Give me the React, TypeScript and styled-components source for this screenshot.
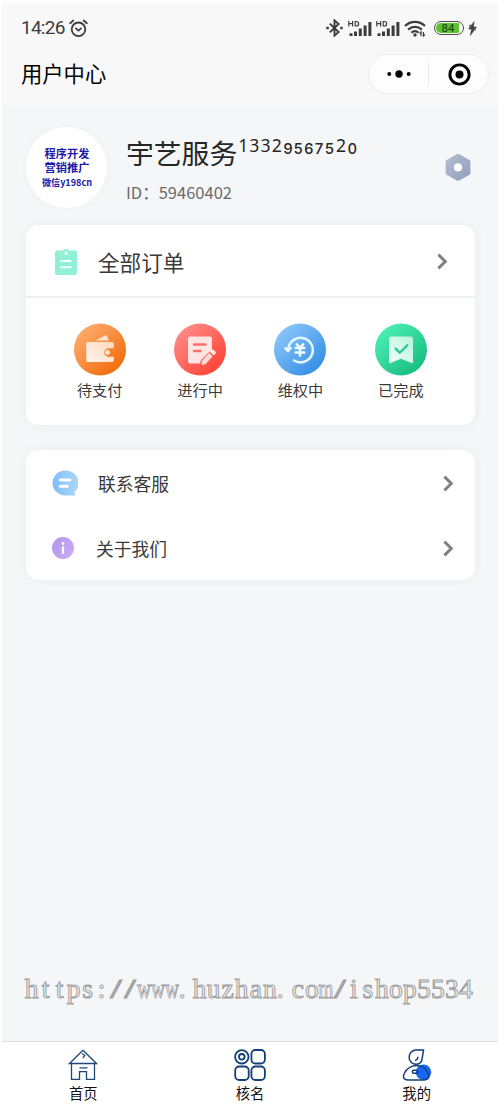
import React from 'react';
import styled, { createGlobalStyle } from 'styled-components';

const GlobalStyle = createGlobalStyle`
  *, *::before, *::after { box-sizing: border-box; }
  body {
    margin: 0;
    background: #fff;
    font-family: 'Noto Sans CJK SC', 'Noto Sans', sans-serif;
    color: #3a3a3a;
  }
  svg { display: block; flex: none; }
`;

const Screen = styled.div`
  width: 500px;
  height: 1111px;
  display: flex;
  flex-direction: column;
  border: solid #fefefe;
  border-width: 3px 2px 0;
  background: #f5f6f8;
  overflow: hidden;
`;

const Header = styled.header`
  height: 102px;
  flex: none;
  background: #f8f8f8;
`;

const StatusBar = styled.div`
  height: 50px;
  display: flex;
  align-items: center;
  padding: 0 21px 0 19px;
`;

const Clock = styled.span`
  font: 400 19px/24px Roboto, sans-serif;
  letter-spacing: -0.75px;
  color: #3c3c3c;
  margin-right: 4px;
`;

const StatusIcons = styled.div`
  margin-left: auto;
  display: flex;
  align-items: center;
`;

const Signal = styled.div`
  display: flex;
  width: 28px;
`;

const Battery = styled.div`
  width: 30px;
  height: 14px;
  margin: 0 4px 0 8px;
  padding: 1px;
  border: 1.3px solid #4a4f48;
  border-radius: 7px;
  display: flex;
`;

const Charge = styled.span`
  flex: 1;
  border-radius: 5px;
  background: linear-gradient(90deg, #58c42f 90%, #fff 90%);
  color: #173c10;
  font: 400 11.5px/10.5px Roboto, sans-serif;
  text-align: center;
  padding-right: 2px;
`;

const TitleBar = styled.div`
  height: 42px;
  display: flex;
  align-items: center;
  justify-content: space-between;
  padding: 0 9px 0 19px;
`;

const PageTitle = styled.h1`
  margin: 0 0 2px;
  font-size: 21.3px;
  line-height: 30px;
  font-weight: 400;
  color: #000;
`;

const Capsule = styled.div`
  width: 121px;
  height: 40px;
  border: 1px solid #ededed;
  border-radius: 20px;
  background: #fdfdfd;
  display: flex;
  align-items: center;
`;

const CapsuleHalf = styled.div<{ $divided?: boolean }>`
  flex: 1;
  height: 24px;
  display: flex;
  align-items: center;
  justify-content: center;
  border-right: ${(p) => (p.$divided ? '1px solid #e8e8e8' : '0')};
`;

const Content = styled.main`
  flex: 1;
  display: flex;
  flex-direction: column;
  padding: 22px 23px 0 23.5px;
`;

const Profile = styled.section`
  height: 81px;
  display: flex;
  align-items: center;
  padding-right: 4px;
`;

const Avatar = styled.div`
  width: 81px;
  height: 81px;
  border-radius: 50%;
  background: #fff;
  box-shadow: 0 0 10px rgba(0, 0, 0, 0.03);
  display: flex;
  flex-direction: column;
  align-items: center;
  justify-content: center;
  padding-left: 2px;
  color: #1d18a8;
  font-weight: 700;
`;

const AvatarLine = styled.span<{ $small?: boolean }>`
  font-size: ${(p) => (p.$small ? 9.1 : 11.2)}px;
  line-height: 14.3px;
  white-space: nowrap;
`;

const Identity = styled.div`
  flex: 1;
  margin-left: 19.5px;
`;

const Name = styled.div`
  height: 40px;
  display: flex;
  font-size: 27.8px;
  line-height: 40px;
  color: #262626;
`;

const Digits = styled.span<{ $low?: boolean }>`
  font-family: ${(p) => (p.$low ? 'Inter' : "'Noto Sans'")}, sans-serif;
  font-size: ${(p) => (p.$low ? 14.8 : 17.6)}px;
  font-weight: ${(p) => (p.$low ? 500 : 400)};
  font-variant-numeric: tabular-nums;
  letter-spacing: ${(p) => (p.$low ? 0.8 : 1.1)}px;
  line-height: ${(p) => (p.$low ? 35 : 27)}px;
  margin-left: ${(p) => (p.$low ? 0.3 : 1)}px;
`;

const UserId = styled.div`
  font-size: 16.5px;
  line-height: 24px;
  color: #6b6b6b;
  margin-top: 8px;
`;

const Card = styled.section<{ $gap: number }>`
  margin-top: ${(p) => p.$gap}px;
  border-radius: 13px;
  background: #fff;
  box-shadow: 0 0 12px rgba(60, 70, 90, 0.055);
`;

const OrdersHead = styled.div`
  height: 73px;
  display: flex;
  align-items: center;
  padding: 2px 27px 0 28px;
  border-bottom: 2px solid #eeeff0;
`;

const OrdersTitle = styled.span`
  flex: 1;
  margin-left: 20.5px;
  font-size: 21.6px;
  line-height: 32px;
`;

const OrderGrid = styled.div`
  height: 127px;
  display: grid;
  grid-template-columns: repeat(4, 1fr);
  padding: 25px 24px 0;
`;

const OrderItem = styled.div`
  display: flex;
  flex-direction: column;
  align-items: center;
  font-size: 15.2px;
  line-height: 22px;
  gap: 2px;
`;

const ServiceRow = styled.div`
  height: 65px;
  display: flex;
  align-items: center;
  padding: 1px 21px 0 26px;
`;

const ServiceIcon = styled.span<{ $width: number }>`
  width: ${(p) => p.$width}px;
`;

const ServiceLabel = styled.span`
  flex: 1;
  font-size: 17.8px;
  line-height: 26px;
`;

const Watermark = styled.div`
  margin: auto -1px 37px -1px;
  height: 30px;
  display: flex;
  font: 400 27.5px/30px 'Liberation Serif', serif;
  color: #f5f6f8;
  -webkit-text-stroke: 1px #9c9ea1;
`;

const Glyph = styled.span<{ $char: string }>`
  width: 14.03px;
  flex: none;
  display: flex;
  justify-content: ${(p) => (p.$char === '.' ? 'flex-start' : 'center')};
  transform: scaleX(${(p) => ('wm'.includes(p.$char) ? 0.7 : p.$char === '/' ? 1.5 : 1)});
`;

const TabBar = styled.nav`
  height: 70px;
  flex: none;
  margin: 0 -2px;
  display: grid;
  grid-template-columns: repeat(3, 1fr);
  border-top: 1px solid #dfe2e4;
  background: #fff;
`;

const Tab = styled.div`
  display: flex;
  flex-direction: column;
  align-items: center;
  padding-top: 6px;
  font-size: 14.3px;
  line-height: 20px;
  color: #111;
  gap: 1px;
`;

const AlarmIcon = () => (
  <svg width="19" height="19" viewBox="0 0 19 19" fill="none" stroke="#3c3c3c" strokeWidth="1.8" strokeLinecap="round">
    <circle cx="9.5" cy="10.3" r="6.8" />
    <path d="M1.200 4.200 4.300 1.500M17.800 4.200 14.700 1.500M7 9.400l2.500 2.200L12 9.400" />
  </svg>
);

const BluetoothIcon = () => (
  <svg width="17" height="18" viewBox="0 0 17 18" fill="none" stroke="#3c3c3c" strokeWidth="1.900">
    <path d="M3.800 4.600 12.600 13 8.500 16.600V1.400l4.100 3.600-8.800 8.400" />
    <path d="M.3 9h2.500M14.200 9h2.500" strokeWidth="2.400" />
  </svg>
);

const SignalIcon = () => (
  <Signal>
    <svg width="25" height="17" viewBox="0 0 25 17">
      <path d="M.8 1v5.500M4.600 1v5.500M.8 3.700h3.800M7.200 1.500V6h1c3.300 0 3.300-4.500 0-4.500z" stroke="#3c3c3c" strokeWidth="1.200" fill="none" />
      <path d="M1.500 13.300h3V16h-3zM6 11.500h3V16H6zM10.800 8.500h3V16h-3zM15.600 5.500h3V16h-3zM20.400 2h3v14h-3z" fill="#3c3c3c" />
    </svg>
  </Signal>
);

const WifiIcon = () => (
  <svg width="22" height="17" viewBox="0 0 22 17" fill="none" stroke="#3c3c3c" strokeWidth="2.200">
    <path d="M1 6c5.600-5.500 14.400-5.500 20 0M4.200 9.600c3.800-3.700 9.800-3.700 13.600 0M7.400 12.700c2.100-2 5.100-2 7.200 0" />
    <circle cx="11" cy="15" r="1.700" fill="#3c3c3c" stroke="none" />
    <path d="M17 16v-4l-1.300 1.700M19.400 12v4.200l1.500-1.800" strokeWidth="1.200" />
  </svg>
);

const BoltIcon = () => (
  <svg width="9" height="15" viewBox="0 0 9 15" fill="#3c3c3c" stroke="#3c3c3c" strokeWidth=".5">
    <path d="M6.200.5.600 8h3L2.300 14.500 8.500 6H5.300zM1.500 4.200h2.400L2 7zM7.500 9.200H5L7 7z" />
  </svg>
);

const ChevronIcon = () => (
  <svg width="11" height="17" viewBox="0 0 11 17" fill="none" stroke="#808080" strokeWidth="3">
    <path d="m1.400 1.600 6.900 6.900-6.900 6.900" />
  </svg>
);

const HexIcon = () => (
  <svg width="26" height="28" viewBox="0 0 26 28">
    <defs>
      <linearGradient id="hex" x1="0" y1="0" x2="1" y2="1">
        <stop stopColor="#b4bed4" />
        <stop offset="1" stopColor="#929db9" />
      </linearGradient>
    </defs>
    <path d="M11.700.3q1.300-.7 2.600 0l10.100 5.800q1 .6 1 1.800v11q0 1.200-1 1.800l-10.100 5.800q-1.300.7-2.600 0L1.600 20.700q-1-.6-1-1.800v-11q0-1.200 1-1.800z" fill="url(#hex)" />
    <circle cx="13" cy="13.400" r="4.200" fill="#fff" />
  </svg>
);

const ClipboardIcon = () => (
  <svg width="24" height="28" viewBox="0 0 24 28">
    <rect x="1" y="2.500" width="22" height="24.500" rx="2" fill="#8ff0d5" />
    <path d="M6 4c1.800-.2 2.500-.5 3.300-1.700 1.400-2.100 4-2.100 5.400 0 .8 1.200 1.500 1.500 3.300 1.700l-1 2.200H7z" fill="#8ff0d5" />
    <path d="M5.500 2.600c.3 3 1.200 4 3 4h7c1.800 0 2.700-1 3-4" fill="none" stroke="#aef4e1" strokeWidth=".8" />
    <circle cx="12" cy="5" r="1.500" fill="#fff" />
    <path d="M6.300 13h11.400M6.300 19.300h11.400" stroke="#f2fffb" strokeWidth="2" />
  </svg>
);

const Disc = ({ id, from, to, children }: { id: string; from: string; to: string; children: React.ReactNode }) => (
  <svg width="52" height="53" viewBox="0 0 52 53">
    <defs>
      <linearGradient id={id} x1=".1" y1=".1" x2=".85" y2=".9">
        <stop stopColor={from} />
        <stop offset="1" stopColor={to} />
      </linearGradient>
    </defs>
    <circle cx="26" cy="26.500" r="26" fill={`url(#${id})`} />
    {children}
  </svg>
);

const WalletIcon = () => (
  <Disc id="pay" from="#ffac70" to="#f26c0c">
    <defs>
      <linearGradient id="leather" x1="0" y1="1" x2="1" y2="0">
        <stop stopColor="#fff4ec" />
        <stop offset="1" stopColor="#ffd9bd" />
      </linearGradient>
    </defs>
    <path d="m21.500 17.500 9.700-5q1.200-.5 1.800.6l2 4.400z" fill="#ffe2cd" />
    <path d="M14 19h24q1.800 0 1.800 1.800v4.500h-5.300a4.200 4.200 0 0 0 0 8.400h5.300v3.500q0 1.800-1.800 1.800H14q-1.800 0-1.800-1.800V20.800Q12.200 19 14 19z" fill="url(#leather)" />
    <circle cx="33.500" cy="29.500" r="2.400" fill="#ffe9da" />
  </Disc>
);

const NoteIcon = () => (
  <Disc id="doing" from="#ff8d88" to="#ff4435">
    <path d="M16 13.500h20q2 0 2 2v11.500l-11 10-1 3.500H16q-2 0-2-2V15.500q0-2 2-2z" fill="#ffe6e4" />
    <path d="M20 21.500h11.500M20 28h6.500" stroke="#ff6e66" strokeWidth="2.500" strokeLinecap="round" />
    <g transform="translate(27 42.500) rotate(-48)">
      <path d="M0 0 3.500-2.800H15V2.800H3.500z" fill="#ffd9d6" stroke="#ff5a4e" strokeWidth=".8" />
      <rect x="16" y="-2.900" width="4" height="5.800" rx="1.300" fill="#ffe6e4" />
    </g>
  </Disc>
);

const RefundIcon = () => (
  <Disc id="refund" from="#8dc7fb" to="#348fe4">
    <path d="M14.300 25.500A12.300 12.300 0 1 1 20 37.500" fill="none" stroke="#e3f5ff" strokeWidth="2.600" strokeLinecap="round" />
    <path d="m11 25.300 3 3.300 3-3.500z" fill="#e3f5ff" stroke="#e3f5ff" strokeWidth="2" strokeLinejoin="round" />
    <path d="m22.800 21.300 3.200 3.500 3.200-3.500M26 24.800v8M21.700 25h8.600M21.700 29.500h8.600" stroke="#eefaff" strokeWidth="2.500" strokeLinecap="round" fill="none" />
  </Disc>
);

const DoneIcon = () => (
  <Disc id="done" from="#4df0b5" to="#18bd82">
    <defs>
      <linearGradient id="ribbon" x1="0" y1="1" x2="1" y2="0">
        <stop stopColor="#effff9" />
        <stop offset="1" stopColor="#b8f3dc" />
      </linearGradient>
    </defs>
    <path d="M16 13.500h20q2 0 2 2V39q0 1.700-1.500 1L26 35.700 15.500 40q-1.500.7-1.500-1V15.500q0-2 2-2z" fill="url(#ribbon)" />
    <path d="m20.600 25.700 4.200 4 7.500-7.500" fill="none" stroke="#25c98f" strokeWidth="2.300" strokeLinecap="round" strokeLinejoin="round" />
  </Disc>
);

const ChatIcon = () => (
  <svg width="26" height="26" viewBox="0 0 26 26">
    <defs>
      <linearGradient id="chat" x1="0" y1=".5" x2="1" y2=".5">
        <stop stopColor="#83bdf4" />
        <stop offset="1" stopColor="#aad8fc" />
      </linearGradient>
    </defs>
    <path d="M13 .5a12.500 12.500 0 1 0 0 25h10q1.300-.4.200-1.400l-1-1.700A12.500 12.500 0 0 0 13 .5z" fill="url(#chat)" />
    <path d="M8.300 10h9.600M8.300 16.300h7" stroke="#fff" strokeWidth="3" strokeLinecap="round" />
  </svg>
);

const InfoIcon = () => (
  <svg width="22" height="22" viewBox="0 0 22 22">
    <defs>
      <linearGradient id="info" x1="0" y1="0" x2="1" y2=".7">
        <stop stopColor="#b294ea" />
        <stop offset="1" stopColor="#c9aaf8" />
      </linearGradient>
    </defs>
    <circle cx="11" cy="11" r="11" fill="url(#info)" />
    <circle cx="11" cy="6.500" r="1.400" fill="#fff" />
    <path d="M11 10.300v5.700" stroke="#fff" strokeWidth="2.300" strokeLinecap="round" />
  </svg>
);

const HomeIcon = () => (
  <svg width="30" height="34" viewBox="0 0 30 34" fill="none" stroke="#1f4878" strokeWidth="1.300">
    <path d="M1.500 15.500 14.500 2.800q.5-.5 1 0l13 12.700zM3.500 15.500v15.900h8V23.700h7v7.700h8V15.500M11.500 19.800h8M14 5.500l2.800 2-2 2.700" />
  </svg>
);

const GridIcon = () => (
  <svg width="32" height="34" viewBox="0 0 32 34" fill="none" stroke="#123f78" strokeWidth="1.800">
    <circle cx="7.800" cy="8.800" r="6.700" />
    <circle cx="7.800" cy="8.800" r="2.800" />
    <rect x="17.400" y="2" width="13.500" height="13.500" rx="4" />
    <rect x="1.200" y="18.500" width="13.500" height="13.500" rx="4" />
    <rect x="17.400" y="18.500" width="13.500" height="13.500" rx="4" />
  </svg>
);

const PersonIcon = () => (
  <svg width="32" height="34" viewBox="0 0 32 34" fill="none" stroke="#123f78" strokeWidth="1.500">
    <circle cx="22.500" cy="24.200" r="7.700" fill="#1768f5" stroke="none" />
    <path d="M22.500 2H14.500a7.200 7.200 0 0 0 0 14.300c4 0 6.200-2.400 6.600-5.500zM17 8.800q-.2 3-3 3.800M11.500 18.100c-4.500 1.700-8 5.400-9 9.700-.6 2.700 1.600 4.200 5 4.200h14.500c4 0 6.200-1.600 5.700-4.300-.9-4.500-4-8.300-8-9.600q-4.200-1.200-8.200 0z" />
    <rect x="11.300" y="22.300" width="5.500" height="3" rx="1.500" />
  </svg>
);

const orders = [
  { label: '待支付', icon: <WalletIcon /> },
  { label: '进行中', icon: <NoteIcon /> },
  { label: '维权中', icon: <RefundIcon /> },
  { label: '已完成', icon: <DoneIcon /> },
];

const tabs = [
  { label: '首页', icon: <HomeIcon /> },
  { label: '核名', icon: <GridIcon /> },
  { label: '我的', icon: <PersonIcon /> },
];

const siteUrl = 'https://www.huzhan.com/ishop5534';

export default function App() {
  return (
    <>
      <GlobalStyle />
      <Screen>
        <Header>
          <StatusBar>
            <Clock>14:26</Clock>
            <AlarmIcon />
            <StatusIcons>
              <BluetoothIcon />
              <svg width="5" height="1" />
              <SignalIcon />
              <SignalIcon />
              <WifiIcon />
              <Battery>
                <Charge>84</Charge>
              </Battery>
              <BoltIcon />
            </StatusIcons>
          </StatusBar>
          <TitleBar>
            <PageTitle>用户中心</PageTitle>
            <Capsule>
              <CapsuleHalf $divided>
                <svg width="24" height="8" viewBox="0 0 24 8">
                  <circle cx="2.300" cy="4" r="2" />
                  <circle cx="12" cy="4" r="3.700" />
                  <circle cx="21.700" cy="4" r="2" />
                </svg>
              </CapsuleHalf>
              <CapsuleHalf>
                <svg width="24" height="24" viewBox="0 0 24 24">
                  <circle cx="12.500" cy="12.500" r="9.600" fill="none" stroke="#000" strokeWidth="2.900" />
                  <circle cx="12.500" cy="12.500" r="4" />
                </svg>
              </CapsuleHalf>
            </Capsule>
          </TitleBar>
        </Header>
        <Content>
          <Profile>
            <Avatar>
              <AvatarLine>程序开发</AvatarLine>
              <AvatarLine>营销推广</AvatarLine>
              <AvatarLine $small>微信y198cn</AvatarLine>
            </Avatar>
            <Identity>
              <Name>
                宇艺服务
                <Digits>1332</Digits>
                <Digits $low>95675</Digits>
                <Digits>2</Digits>
                <Digits $low>0</Digits>
              </Name>
              <UserId>ID：59460402</UserId>
            </Identity>
            <HexIcon />
          </Profile>
          <Card $gap={17}>
            <OrdersHead>
              <ClipboardIcon />
              <OrdersTitle>全部订单</OrdersTitle>
              <ChevronIcon />
            </OrdersHead>
            <OrderGrid>
              {orders.map((o) => (
                <OrderItem key={o.label}>
                  {o.icon}
                  {o.label}
                </OrderItem>
              ))}
            </OrderGrid>
          </Card>
          <Card $gap={25}>
            <ServiceRow>
              <ServiceIcon $width={46.5}>
                <ChatIcon />
              </ServiceIcon>
              <ServiceLabel>联系客服</ServiceLabel>
              <ChevronIcon />
            </ServiceRow>
            <ServiceRow>
              <ServiceIcon $width={44.5}>
                <InfoIcon />
              </ServiceIcon>
              <ServiceLabel>关于我们</ServiceLabel>
              <ChevronIcon />
            </ServiceRow>
          </Card>
          <Watermark>
            {[...siteUrl].map((c, i) => (
              <Glyph key={i} $char={c}>
                {c}
              </Glyph>
            ))}
          </Watermark>
        </Content>
        <TabBar>
          {tabs.map((t) => (
            <Tab key={t.label}>
              {t.icon}
              {t.label}
            </Tab>
          ))}
        </TabBar>
      </Screen>
    </>
  );
}
